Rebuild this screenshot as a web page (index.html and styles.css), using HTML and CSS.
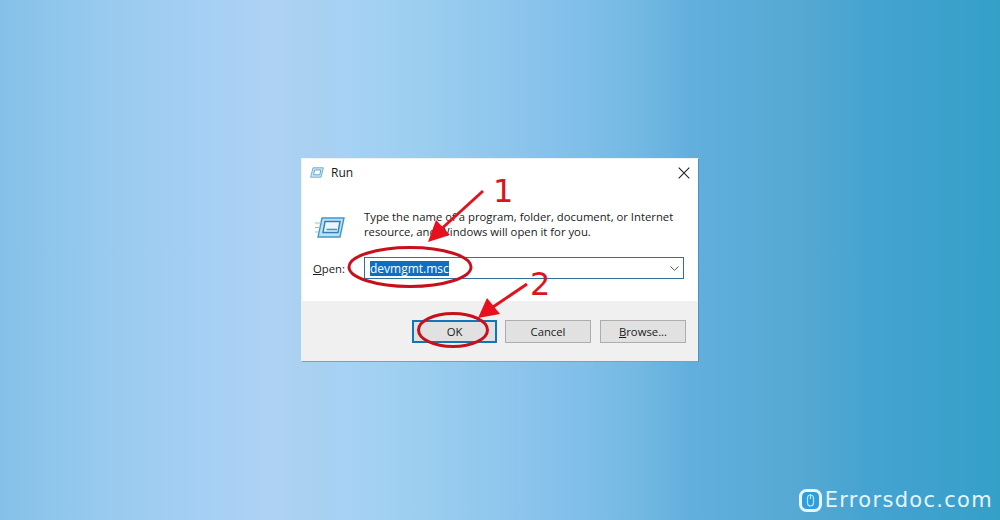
FILE: index.html
```html
<!DOCTYPE html>
<html lang="en">
<head>
  <meta charset="UTF-8" />
  <title>Run dialog - devmgmt.msc</title>
  <link rel="stylesheet" href="styles.css">
</head>
<body>
  <div class="dialog">
    <div class="title-bar">
      <svg class="run-icon-small" width="14" height="11" viewBox="0 0 14 11">
        <path d="M3 .8H13.4L11 10.2H.6Z" fill="#cfe6f5" stroke="#6fb0d8"/>
        <path d="M4.6 3H10.8L9.8 7.8H3.6Z" fill="#fff" stroke="#6fa6c9"/>
      </svg>
      <span class="title">Run</span>
      <svg class="close" width="12" height="12" viewBox="0 0 12 12">
        <path d="M.7.7 11.3 11.3M11.3.7.7 11.3" stroke="#222" stroke-width="1.1" fill="none"/>
      </svg>
    </div>

    <div class="message">
      <svg class="run-icon" width="30" height="21" viewBox="0 0 30 21">
        <path d="M7 1H29L25 20H3Z" fill="#bfe0f4" stroke="#3f97cb" stroke-width="1.4"/>
        <path d="M10 4.500H25L23 15.500H8Z" fill="#eaf6fc" stroke="#2f7fb5" stroke-width="1.4"/>
        <path d="M11.500 12.500H22" stroke="#3f97cb" stroke-width="1.6"/>
        <path d="M0 6H6M0 10.500H5M0 15H4" stroke="#8cc6e6" stroke-width="1.2"/>
      </svg>
      <p>Type the name of a program, folder, document, or Internet<br>resource, and Windows will open it for you.</p>
    </div>

    <div class="open-row">
      <span class="open-label"><u>O</u>pen:</span>
      <div class="combo">
        <span class="selected">devmgmt.msc</span>
        <svg class="chevron" width="9" height="5" viewBox="0 0 9 5">
          <path d="M.5.500 4.500 4.300 8.500.500" stroke="#555" fill="none"/>
        </svg>
      </div>
    </div>

    <div class="footer">
      <button class="btn btn-default">OK</button>
      <button class="btn">Cancel</button>
      <button class="btn"><u>B</u>rowse...</button>
    </div>

    <!-- red annotations drawn on top of the dialog -->
    <svg class="marks" width="398" height="204" viewBox="301 158 398 204">
      <ellipse cx="410" cy="267" rx="61" ry="19.500" class="ring"/>
      <ellipse cx="453" cy="330" rx="34.500" ry="16.500" class="ring"/>
      <path d="M483 191 438 232" class="shaft"/>
      <path d="M428 242 436 220 450 235Z" class="head"/>
      <path d="M527 284 493 307" class="shaft"/>
      <path d="M478 318 487 298 500 314Z" class="head"/>
      <text x="493" y="202" class="num">1</text>
      <text x="530" y="295" class="num">2</text>
    </svg>
  </div>

  <div class="brand">
    <svg width="23" height="23" viewBox="0 0 23 23">
      <rect x="1.500" y="1.500" width="20" height="20" rx="6" fill="#2f9fdc" stroke="#e8f6fc" stroke-width="3"/>
      <path d="M11.500 5V10M8.500 9C8.500 7 9.700 6 11.500 6S14.500 7 14.500 9V14C14.500 16 13.300 17 11.500 17S8.500 16 8.500 14Z" fill="none" stroke="#bfe6f7" stroke-width="1.200"/>
    </svg>
    <span>Errorsdoc.com</span>
  </div>
</body>
</html>
```

FILE: styles.css
```css
html, body {
  height: 100%;
}

body {
  margin: 0;
  display: flex;
  align-items: center;
  justify-content: center;
  overflow: hidden;
  font-family: "Open Sans", "Noto Sans", sans-serif;
  background: linear-gradient(90deg,
    #84c1e9 0,
    #97caee 100px,
    #a5cff5 200px,
    #aed2f3 270px,
    #a8d0f0 325px,
    #a6d2f6 340px,
    #9dcff0 410px,
    #93c8ee 480px,
    #82c0ea 570px,
    #75bae3 630px,
    #62afde 690px,
    #55a9d2 800px,
    #45a3d1 870px,
    #34a0c8 1000px);
}

.dialog {
  position: relative;
  width: 398px;
  height: 204px;
  box-sizing: border-box;
  display: flex;
  flex-direction: column;
  background: #fff;
  border: 1px solid #eaf4fb;
  border-right-color: #4f93c0;
  border-bottom-color: #6aa5cc;
  font-size: 11.3px;
  color: #1a1a1a;
}

.title-bar {
  display: flex;
  align-items: center;
  height: 27px;
  padding: 0 8px;
  flex-shrink: 0;
}

.title {
  margin-left: 7px;
  font-size: 12px;
}

.close {
  margin-left: auto;
}

.message {
  display: flex;
  align-items: center;
  height: 46px;
  margin-top: 15px;
  padding-left: 13px;
}

.run-icon {
  margin-top: 6px;
}

.message p {
  margin: 0 0 0 19px;
  line-height: 15px;
}

.open-row {
  display: flex;
  align-items: center;
  margin-top: 10px;
  padding-left: 11px;
}

.open-label {
  width: 51px;
}

.combo {
  display: flex;
  align-items: center;
  justify-content: space-between;
  width: 320px;
  height: 22px;
  box-sizing: border-box;
  border: 1px solid #2f7298;
  padding: 0 4px 0 5px;
}

.selected {
  background: #0b6fc4;
  color: #fff;
  font-size: 12px;
  line-height: 15px;
}

.footer {
  display: flex;
  justify-content: flex-end;
  align-items: flex-start;
  gap: 9px;
  flex: 1;
  margin-top: 22px;
  padding: 19px 12px 0 0;
  background: #f0f0f0;
}

.btn {
  width: 86px;
  height: 23px;
  box-sizing: border-box;
  padding: 0;
  border: 1px solid #adadad;
  background: #e1e1e1;
  font: inherit;
  color: #1a1a1a;
}

.btn-default {
  width: 85px;
  margin-right: -1px;
  border: 2px solid #0f78b4;
}

.marks {
  position: absolute;
  left: -1px;
  top: -1px;
}

.ring {
  fill: none;
  stroke: #c8101c;
  stroke-width: 3;
}

.shaft {
  stroke: #e0141e;
  stroke-width: 3;
}

.head {
  fill: #e8101c;
}

.num {
  font-family: "DejaVu Sans", sans-serif;
  font-size: 32px;
  fill: #dc1420;
}

.brand {
  position: absolute;
  right: 7px;
  bottom: 8px;
  display: flex;
  align-items: center;
  gap: 3px;
  font-family: "DejaVu Sans", sans-serif;
  font-size: 21px;
  letter-spacing: 1.3px;
  line-height: 23px;
  color: #e4f5fb;
}
```
